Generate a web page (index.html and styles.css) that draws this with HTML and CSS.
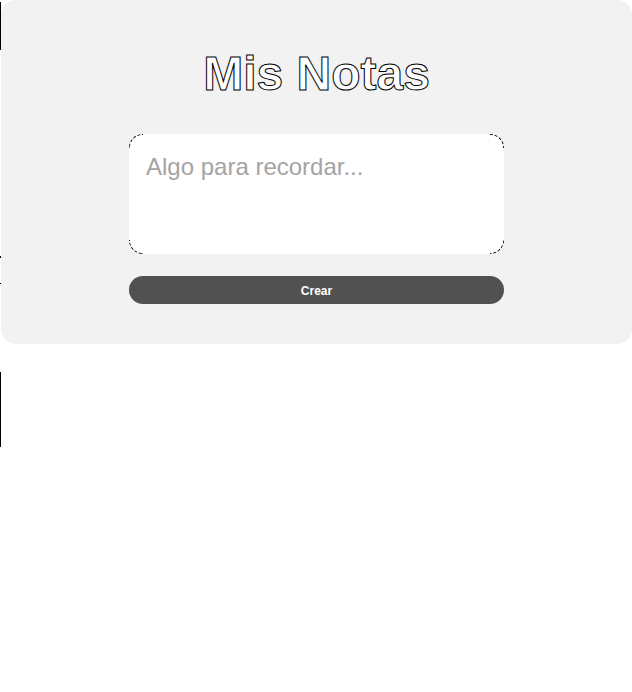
FILE: index.html
```html
<!DOCTYPE html>
<html lang="es">
<head>
<meta charset="utf-8">
<title>Mis Notas</title>
<link rel="stylesheet" href="styles.css">
</head>
<body>
<div class="edge-marks" aria-hidden="true">
  <span class="mark mark-a"></span>
  <span class="mark mark-b"></span>
  <span class="mark mark-c"></span>
  <span class="mark mark-d"></span>
</div>
<main class="card">
  <h1 class="title">Mis Notas</h1>
  <form class="note-form">
    <div class="field">
      <textarea class="note-input" placeholder="Algo para recordar..."></textarea>
      <span class="corner corner-tl"></span>
      <span class="corner corner-tr"></span>
      <span class="corner corner-bl"></span>
      <span class="corner corner-br"></span>
    </div>
    <button type="button" class="create-btn">Crear</button>
  </form>
</main>
</body>
</html>
```
FILE: styles.css
```css
html, body {
  margin: 0;
  padding: 0;
  background: #ffffff;
  font-family: "Liberation Sans", Arial, sans-serif;
}

.card {
  margin-left: 1px;
  width: 631px;
  box-sizing: border-box;
  background: #f2f2f2;
  border-radius: 15px;
  padding: 46px 0 40px;
  display: flex;
  flex-direction: column;
  align-items: center;
}

.title {
  margin: 0;
  font-size: 48px;
  line-height: 55px;
  font-weight: bold;
  color: #ffffff;
  -webkit-text-stroke: 1px #000000;
}

.note-form {
  margin-top: 33px;
  display: flex;
  flex-direction: column;
  gap: 22px;
  width: 375px;
}

.field {
  position: relative;
  height: 120px;
}

.note-input {
  display: block;
  width: 100%;
  height: 120px;
  box-sizing: border-box;
  border: none;
  outline: none;
  resize: none;
  border-radius: 15px;
  background: #ffffff;
  padding: 19px 18px 16px 17px;
  font-family: "Liberation Sans", Arial, sans-serif;
  font-size: 24px;
  color: #333333;
}

.note-input::placeholder {
  color: #a4a4a4;
}

.corner {
  position: absolute;
  width: 14px;
  height: 14px;
  box-sizing: border-box;
  border: 0 dashed #111111;
  pointer-events: none;
}

.corner-tl {
  top: 0;
  left: 0;
  border-top-width: 1px;
  border-left-width: 1px;
  border-top-left-radius: 14px;
}

.corner-tr {
  top: 0;
  right: 0;
  border-top-width: 1px;
  border-right-width: 1px;
  border-top-right-radius: 14px;
}

.corner-bl {
  bottom: 0;
  left: 0;
  border-bottom-width: 1px;
  border-left-width: 1px;
  border-bottom-left-radius: 14px;
}

.corner-br {
  bottom: 0;
  right: 0;
  border-bottom-width: 1px;
  border-right-width: 1px;
  border-bottom-right-radius: 14px;
}

.create-btn {
  height: 28px;
  border: none;
  border-radius: 14px;
  background: #515151;
  color: #ffffff;
  font-family: "Liberation Sans", Arial, sans-serif;
  font-size: 12px;
  font-weight: bold;
  cursor: pointer;
  padding: 1px 0 0;
}

.edge-marks {
  position: absolute;
  left: 0;
  top: 0;
  width: 1px;
  height: 450px;
  z-index: 2;
  pointer-events: none;
}

.mark {
  position: absolute;
  left: 0;
  width: 1px;
  background: #000000;
}

.mark-a { top: 2px; height: 48px; }
.mark-b { top: 256px; height: 2px; }
.mark-c { top: 283px; height: 1px; }
.mark-d { top: 372px; height: 75px; }
```
